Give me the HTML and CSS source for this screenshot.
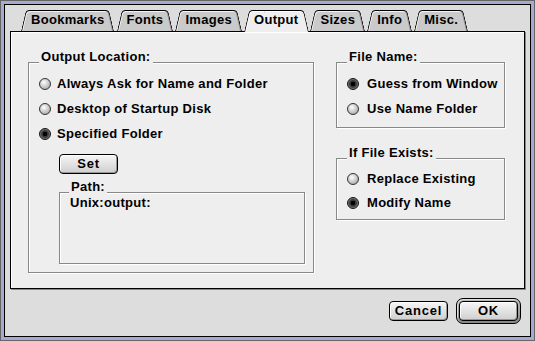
FILE: index.html
```html
<html>
<head>
<title>Output</title>
<link rel="stylesheet" href="styles.css">
</head>
<body>

<div class="window">

<div class="tabs">
<div class="tab">Bookmarks</div>
<div class="tab">Fonts</div>
<div class="tab">Images</div>
<div class="tab active">Output</div>
<div class="tab">Sizes</div>
<div class="tab">Info</div>
<div class="tab">Misc.</div>
</div>

<div class="panel">

<div class="group location">
<div class="group-title">Output Location:</div>
<div class="options">
<div class="option"><span class="radio"></span>Always Ask for Name and Folder</div>
<div class="option"><span class="radio"></span>Desktop of Startup Disk</div>
<div class="option"><span class="radio on"></span>Specified Folder</div>
</div>
<div class="btn set">Set</div>
<div class="group path">
<div class="group-title">Path:</div>
<div class="path-text">Unix:output:</div>
</div>
</div>

<div class="side">
<div class="group filename">
<div class="group-title">File Name:</div>
<div class="options">
<div class="option"><span class="radio on"></span>Guess from Window</div>
<div class="option"><span class="radio"></span>Use Name Folder</div>
</div>
</div>
<div class="group exists">
<div class="group-title">If File Exists:</div>
<div class="options">
<div class="option"><span class="radio"></span>Replace Existing</div>
<div class="option"><span class="radio on"></span>Modify Name</div>
</div>
</div>
</div>

</div>

<div class="actions">
<div class="btn">Cancel</div>
<div class="default"><div class="btn">OK</div></div>
</div>

</div>

</body>
</html>
```

FILE: styles.css
```css
body{
margin:0;
background-color:#DDDDDD;
font-family:"Liberation Sans",Arial,sans-serif;
font-weight:bold;
font-size:13px;
letter-spacing:0.3px;
line-height:14px;
color:#000;
}

/* window frame */
.window{
box-sizing:border-box;
width:535px;
height:341px;
border:1px solid #666;
box-shadow:inset 0 0 0 3px #A8A8D0,inset 0 0 0 4px #000;
background-color:#DDDDDD;
padding:9px 9px 0 9px;
}

/* tabs */
.tabs{
display:flex;
align-items:flex-start;
gap:2px;
height:21px;
margin-left:11px;
position:relative;
z-index:1;
}
.tab{
position:relative;
z-index:0;
box-sizing:border-box;
height:21px;
padding:3px 10px 0 10px;
white-space:nowrap;
}
.tab::before,.tab::after{
content:"";
position:absolute;
top:0;
bottom:0;
width:60%;
background-color:#CACACA;
border-top:1px solid #000;
z-index:-1;
}
.tab::before{
left:0;
border-left:1px solid #000;
border-top-left-radius:4px;
transform:skewX(-13deg);
transform-origin:bottom left;
box-shadow:inset 1px 1px 0 #F4F4F4;
}
.tab::after{
right:0;
border-right:1px solid #000;
border-top-right-radius:4px;
transform:skewX(13deg);
transform-origin:bottom right;
box-shadow:inset -1px 0 0 #999,inset 0 1px 0 #F4F4F4;
}
.tab.active{height:22px;margin-bottom:-1px;}
.tab.active::before,.tab.active::after{background-color:#EEEEEE;}
.tab.active::before{box-shadow:inset 1px 1px 0 #FFF;}
.tab.active::after{box-shadow:inset 0 1px 0 #FFF;}

/* panel */
.panel{
box-sizing:border-box;
height:258px;
display:flex;
gap:22px;
align-items:flex-start;
padding:30px 0 0 17px;
background-color:#EEEEEE;
border:1px solid #000;
box-shadow:1px 1px 0 #888,inset 1px 1px 0 #FFF;
}

/* group boxes */
.group{
box-sizing:border-box;
border:1px solid #888;
box-shadow:1px 1px 0 #FFF,inset 1px 1px 0 #FFF;
padding:0 8px 0 10px;
}
.group-title{
margin-top:-13px;
width:fit-content;
padding:0 2px;
background-color:#EEEEEE;
}
.options{margin-top:7px;}
.option{
display:flex;
align-items:center;
gap:6px;
height:25px;
white-space:nowrap;
}

.location{width:286px;padding-bottom:8px;}
.side{display:flex;flex-direction:column;width:169px;}
.filename{padding-bottom:6px;}
.filename .option{gap:8px;}
.exists{margin-top:30px;padding-bottom:4px;}
.exists .option{height:24px;gap:8px;}

/* radio buttons */
.radio{
box-sizing:border-box;
width:12px;
height:12px;
border-radius:50%;
border:1px solid #333;
background:radial-gradient(circle at 40% 35%,#FFF 0,#E4E4E4 25%,#B0B0B0 75%,#8A8A8A 100%);
flex:none;
}
.radio.on{
border-color:#111;
background:radial-gradient(circle,#000 0 2px,#3A3A3A 2.6px 3.4px,#6A6A6A 4.5px,#999 5.5px);
}

/* buttons */
.btn{
box-sizing:border-box;
width:59px;
height:20px;
border:1px solid #000;
border-radius:4px;
background:linear-gradient(#F6F6F6,#CFCFCF);
box-shadow:inset 1px 1px 0 #FFF,inset -1px -1px 0 #999;
display:flex;
justify-content:center;
align-items:center;
letter-spacing:0.8px;
}
.set{margin:8px 0 0 20px;}
.default{
border:1px solid #000;
border-radius:7px;
padding:2px;
background:linear-gradient(#BBB,#888);
box-shadow:inset 1px 1px 0 #DDD;
}

.path{
height:72px;
margin:18px 0 0 20px;
padding:0;
}
.path .group-title{margin-left:9px;}
.path-text{margin-top:2px;padding-left:10px;}

/* bottom buttons */
.actions{
display:flex;
justify-content:flex-end;
align-items:center;
gap:8px;
margin-top:9px;
padding-right:4px;
}
```
